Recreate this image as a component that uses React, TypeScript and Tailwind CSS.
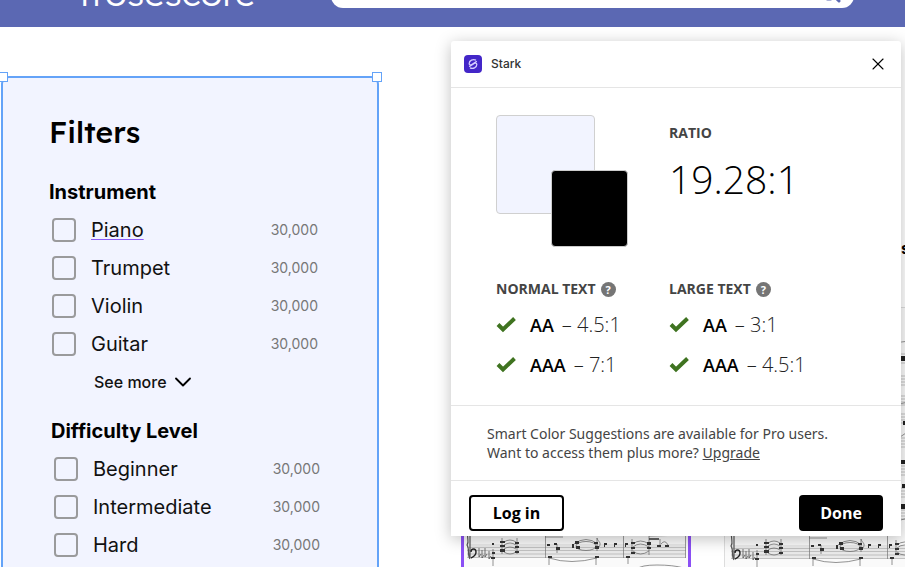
import { ChevronDown, Search, X } from "lucide-react";

const instruments = ["Piano", "Trumpet", "Violin", "Guitar"];
const levels = ["Beginner", "Intermediate", "Hard"];

function FilterGroup({ title, items }: { title: string; items: string[] }) {
  return (
    <fieldset>
      <legend className="mb-[5px] text-xl leading-7 font-bold text-black">{title}</legend>
      {items.map((item) => (
        <label key={item} className="flex h-[38px] items-center pl-[3px] text-xl leading-7 text-[#111]">
          <input
            type="checkbox"
            className="mr-[15px] size-6 shrink-0 appearance-none rounded-[4px] border-2 border-[#9a9a9c]"
          />
          <span className={item === "Piano" ? "underline decoration-[#8b5cf6] decoration-1 underline-offset-2" : ""}>
            {item}
          </span>
          <span className="ml-auto text-sm text-[#777]">30,000</span>
        </label>
      ))}
    </fieldset>
  );
}

const staves = [46, 68, 88, 106, 130, 158, 180, 202];

function Score() {
  return (
    <svg viewBox="0 0 230 262" className="w-[230px] shrink-0" fill="none" stroke="#666" strokeWidth=".7" aria-hidden="true">
      {staves.map((y) => (
        <path key={y} d={`M6 ${y}h219M6 ${y + 3}h219M6 ${y + 6}h219M6 ${y + 9}h219`} stroke="#aaa" />
      ))}
      <path d="M170 37q6-4 14-4M170 100q6-6 14-6M170 131q6-2 14-8M170 215q6-4 14-5" />
      <path d="M172 48h9v5h-9zM178 113h4v4h-4zM176 152h4v4h-4zM177 176h4v4h-4zM174 196h6v5h-6z" fill="#222" stroke="none" />

      <path d="M6 237h219v14H6z" fill="#e9e9e9" stroke="none" />
      <path d="M6 240.500h219M6 243.500h219M6 247h219M6 250.500h219" stroke="#b0b0b0" />
      <path d="M7 224c-2 8 2 10-1 14 3 4 0 10 3 14M9 224v27" stroke="#555" strokeWidth="1.200" />
      <path d="M84.500 224v27M162.500 224v27M224.500 224v27" stroke="#777" />
      <path d="M10 245c0-4 5-4 5 0s-3 5-5 6" stroke="#222" strokeWidth="1.400" />
      <path d="M18 241v9l2-3M21 243v8l2-3M24 241v9l2-3M28 244v8l2-3" stroke="#444" />
      <path d="M32 242v17M41 231v16M56 231v16M88 250v8M96 237v9M136 231v13M135 250v8M167 250v7M171 232v15M188 229v19M199 232v8" />
      <path d="M136 231c1 4 5 4 2 9M84 230h18M188 229q20 0 35-2" />
      <path d="M43 235q6-4 12 0M43 238q6-4 12 0M43 242q6-4 12 0M43 245q6 4 12 0" />
      <ellipse cx="125" cy="239" rx="10" ry="4.500" />
      <path d="M113 237q12-9 24 0M172 237q7-6 16 0M172 240q7-6 16 0M172 244q7 6 16 0M88 251q22 7 48 0M176 262q4-4 20-4t27 3" />
      <path d="M188 232h10" stroke="#333" strokeWidth="1.500" />
      <g fill="#333" stroke="none">
        <path d="M39 234h5v2h-5zM39 238h5v2h-5zM39 242h5v3h-5zM54 235h4v2h-4zM54 239h4v2h-4zM54 244h4v2h-4z" />
        <path d="M31 236h2v2h-2zM31 245h3v2h-3zM30 250h4v2h-4zM86 237h3v2h-3zM87 249h4v2h-4zM95 240h4v3h-4zM93 236h3v2h-3z" />
        <path d="M111 237h2v4h-2zM114 234h4v3h-4zM115 239h4v3h-4zM133 235h4v2h-4zM134 239h4v3h-4zM134 249h4v2h-4z" />
        <path d="M143 236h3v2h-2v2h-1zM153 236h3v2h-2v2h-1zM164 236h3v2h-2v2h-1zM165 249h4v2h-4z" />
        <path d="M170 235h4v2h-4zM170 240h4v2h-4zM170 245h4v2h-4zM186 235h4v3h-4zM186 240h4v2h-4zM196 238h4v2h-4zM204 238h4v2h-4z" />
      </g>
      <path d="M200 237q4-5 7 1" />
      <path d="M27 261h14M44 261h8M55 261h4" stroke="#aaa" strokeDasharray="3 1" />
    </svg>
  );
}

function Check() {
  return (
    <svg viewBox="0 0 20 16" className="h-4 w-5" aria-hidden="true">
      <path d="M2 7.500l5 5L18.500 1.500" fill="none" stroke="#3f7320" strokeWidth="4" />
    </svg>
  );
}

function Result({ title, rows }: { title: string; rows: [string, string][] }) {
  return (
    <section>
      <h3 className="mb-[6px] flex h-5 items-center gap-[5px] text-sm font-bold text-[#444]">
        {title}
        <button
          aria-label={"About " + title.toLowerCase()}
          className="size-[15px] rounded-full bg-[#757575] text-[11px] leading-[15px] font-bold text-white"
        >
          ?
        </button>
      </h3>
      {rows.map(([grade, ratio]) => (
        <p key={grade} className="flex h-10 items-center gap-2 text-black">
          <Check />
          <span className="ml-[6px] text-lg font-semibold">{grade}</span>
          <span className="text-xl font-light text-[#222]">– {ratio}</span>
        </p>
      ))}
    </section>
  );
}

function StarkDialog() {
  return (
    <div
      role="dialog"
      aria-label="Stark"
      className="absolute top-[41px] right-1 w-[450px] rounded-t-[3px] bg-white font-['Open_Sans',sans-serif] shadow-[0_3px_16px_rgba(0,0,0,0.25)]"
    >
      <header className="flex h-[46px] items-center px-[13px] font-[Inter,sans-serif]">
        <svg viewBox="0 0 18 18" className="size-[18px]" fill="none" aria-hidden="true">
          <rect width="18" height="18" rx="4" fill="#4326c8" />
          <path
            d="M12 5.200C9 3.800 5.200 5.500 5.200 8.500c0 1.800 1.500 1.700 2.600 1L12.800 6.200M6 12.800c3 1.400 6.800-.3 6.800-3.300 0-1.800-1.500-1.700-2.600-1L5.200 11.800"
            stroke="#d5ccff"
            strokeWidth="1.300"
          />
        </svg>
        <h2 className="ml-[9px] text-xs font-medium text-[#333]">Stark</h2>
        <button aria-label="Close" className="ml-auto">
          <X className="size-5" strokeWidth={1.3} />
        </button>
      </header>

      <div className="grid grid-cols-[173px_1fr] border-t border-[#e5e5e5] px-[45px] pt-[27px] pb-5">
        <div className="relative size-[132px]">
          <div className="size-[99px] rounded border border-[#d0d0d0] bg-[#f2f4ff]" />
          <div className="absolute right-0 bottom-0 size-[77px] rounded border border-[#ccc] bg-black" />
        </div>
        <div className="pt-2">
          <h3 className="text-sm leading-5 font-bold text-[#444]">RATIO</h3>
          <p className="mt-2 text-[39px] leading-[56px] font-light text-black">19.28:1</p>
        </div>
        <div className="mt-8">
          <Result title="NORMAL TEXT" rows={[["AA", "4.5:1"], ["AAA", "7:1"]]} />
        </div>
        <div className="mt-8">
          <Result title="LARGE TEXT" rows={[["AA", "3:1"], ["AAA", "4.5:1"]]} />
        </div>
      </div>

      <p className="border-t border-[#e5e5e5] px-9 py-[18px] font-['Noto_Sans',sans-serif] text-sm leading-[19px] text-[#444]">
        Smart Color Suggestions are available for Pro users.
        <br />
        Want to access them plus more?{" "}
        <a href="#upgrade" className="underline">
          Upgrade
        </a>
      </p>

      <footer className="flex justify-between border-t border-[#e5e5e5] px-[18px] pt-[14px] pb-[5px]">
        <button className="h-9 w-[95px] rounded border-2 border-black text-base font-bold text-black">Log in</button>
        <button className="h-9 w-[84px] rounded bg-black text-base font-bold text-white">Done</button>
      </footer>
    </div>
  );
}

export default function App() {
  return (
    <div className="relative h-screen overflow-hidden bg-white font-[Inter,sans-serif] text-black">
      <header className="flex h-[27px] overflow-hidden bg-[#5b68b3]">
        <span className="-mt-[26px] w-[331px] shrink-0 pl-[75px] font-[Lexend,Lato,sans-serif] text-[36px] leading-[38px] font-light text-white">
          Trosescore
        </span>
        <label className="-mt-8 mr-[51px] flex h-10 flex-1 items-center rounded-xl bg-white pr-3">
          <input type="search" aria-label="Search" className="w-full flex-1 outline-none" />
          <Search className="mt-2 size-6 text-[#5b68b3]" strokeWidth={3} />
        </label>
      </header>

      <main className="flex">
        <aside className="relative mt-[49px] ml-[1px] h-[520px] w-[378px] shrink-0 rounded-lg border-2 border-[#64a3f8] bg-[#f2f4ff] pt-[34px] pr-[59px] pl-[46px]">
          <span className="absolute -top-[6px] -left-[5px] size-[10px] border border-[#64a3f8] bg-white" />
          <span className="absolute -top-[6px] -right-[5px] size-[10px] border border-[#64a3f8] bg-white" />
          <h2 className="mb-[26px] font-[Lexend,Inter,sans-serif] text-[30px] leading-10 font-medium">Filters</h2>
          <FilterGroup title="Instrument" items={instruments} />
          <button className="ml-[45px] flex h-[38px] items-center gap-[2px] text-base font-medium text-[#111]">
            See more
            <ChevronDown className="size-7 text-black" strokeWidth={1.6} />
          </button>
          <div className="mt-4 -mr-[2px] pl-[2px]">
            <FilterGroup title="Difficulty Level" items={levels} />
          </div>
        </aside>

        <section className="ml-[82px] flex gap-[33px] pt-[207px]">
          <article className="shrink-0">
            <div className="h-[73px]" />
            <div className="border-x-3 border-t-3 border-[#8b4ff5] bg-[#fafafa]">
              <div className="-mx-[3px] -mt-[3px]">
                <Score />
              </div>
            </div>
          </article>
          <article className="shrink-0">
            <h3 className="h-[73px] pt-1 pl-[177px] text-base leading-5 font-bold">s</h3>
            <div className="border-t border-l border-[#ddd] bg-[#fafafa]">
              <Score />
            </div>
          </article>
        </section>
      </main>

      <StarkDialog />
    </div>
  );
}
